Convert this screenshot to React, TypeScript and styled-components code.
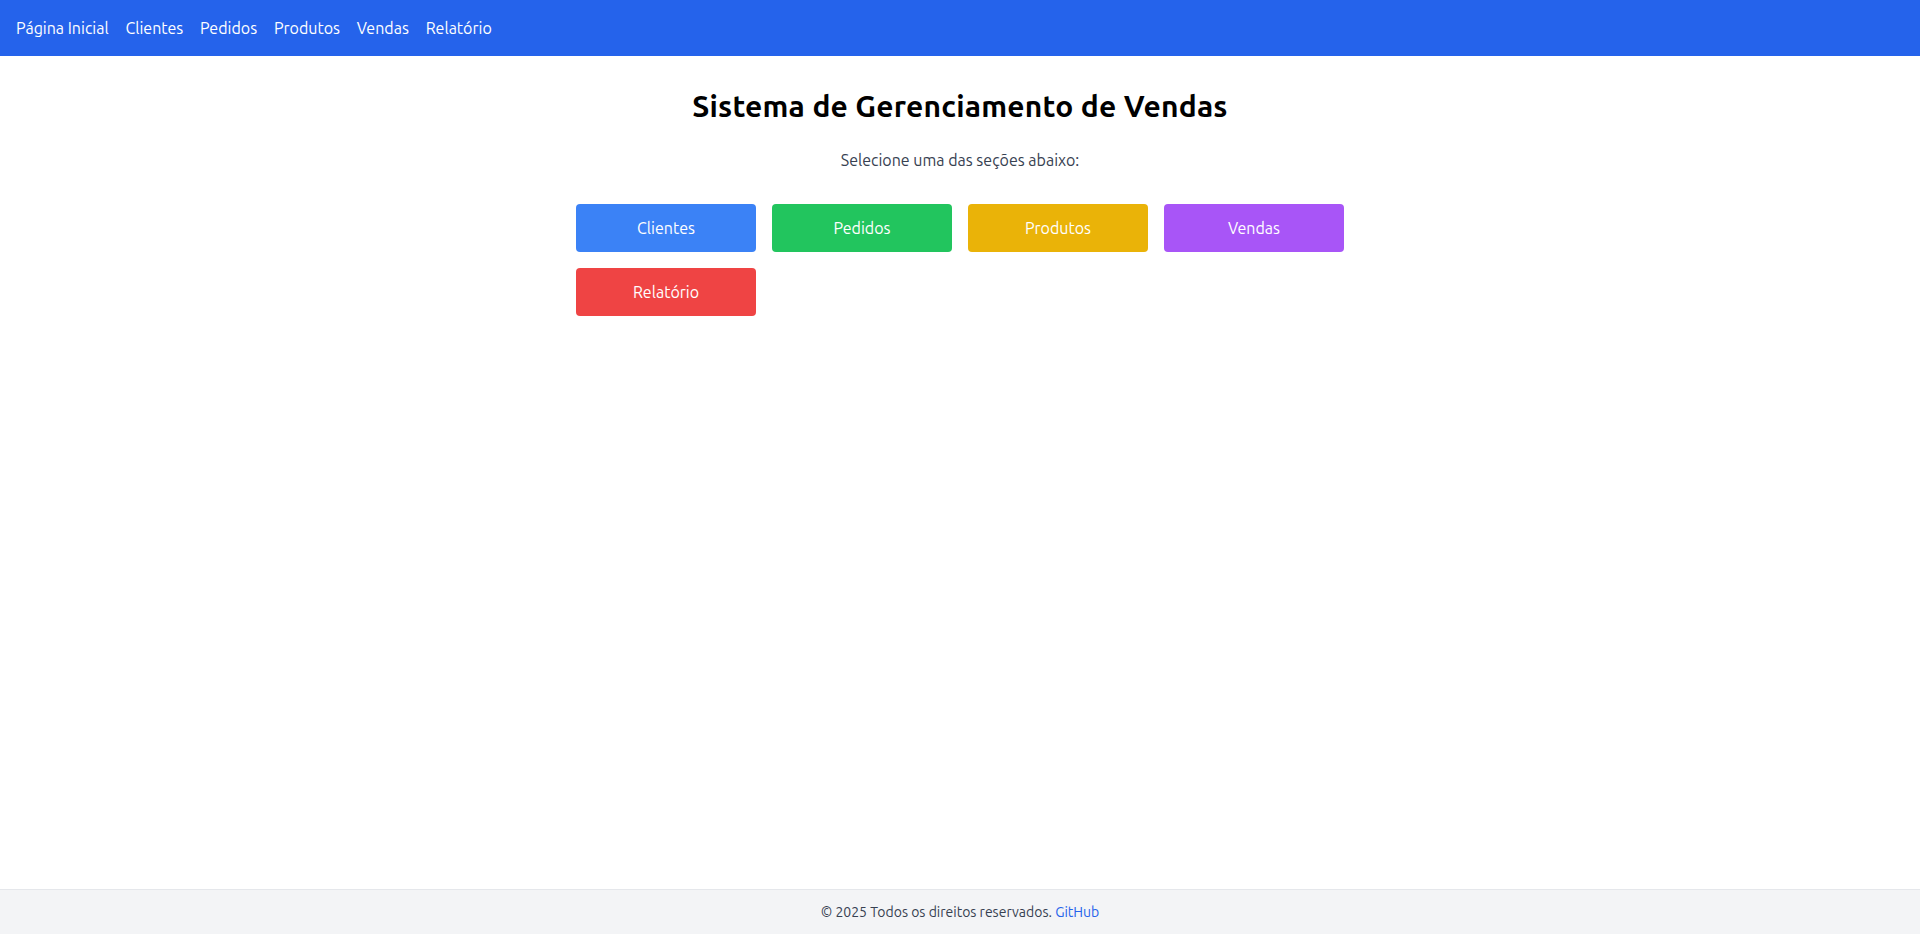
import React from "react";
import styled, { createGlobalStyle } from "styled-components";

const Global = createGlobalStyle`
  * { box-sizing: border-box; }
  html, body { margin: 0; padding: 0; }
  body {
    font-family: "Ubuntu", Lato, "Noto Sans", sans-serif;
    background: #ffffff;
    color: #000;
  }
  #root { min-height: 100vh; display: flex; flex-direction: column; }
`;

const Page = styled.div`
  min-height: 100vh;
  display: flex;
  flex-direction: column;
`;

const NavBar = styled.nav`
  background: #2563eb;
  padding: 16px;
  display: flex;
  gap: 16.8px;
  height: 56px;
  align-items: center;
`;

const NavLink = styled.a`
  color: #ffffff;
  font-size: 16px;
  line-height: 24px;
  text-decoration: none;
  cursor: pointer;
`;

const Main = styled.main`
  flex: 1;
  padding: 32px 16px;
  display: flex;
  flex-direction: column;
  align-items: center;
`;

const Title = styled.h1`
  margin: 0 0 24px;
  font-size: 30px;
  line-height: 36px;
  font-weight: 700;
  letter-spacing: 0.2px;
  color: #000;
  text-align: center;
`;

const Subtitle = styled.p`
  margin: 0 0 32px;
  font-size: 16px;
  line-height: 24px;
  color: #374151;
  text-align: center;
`;

const Grid = styled.div`
  width: 768px;
  display: grid;
  grid-template-columns: repeat(4, 1fr);
  gap: 16px;
`;

const SectionButton = styled.button<{ $bg: string }>`
  height: 48px;
  border: none;
  border-radius: 4px;
  background: ${(p) => p.$bg};
  color: #ffffff;
  font-family: inherit;
  font-size: 16px;
  line-height: 24px;
  cursor: pointer;
`;

const Footer = styled.footer`
  background: #f3f4f6;
  border-top: 1px solid #e5e7eb;
  padding: 12px 16px;
  text-align: center;
  font-size: 14px;
  line-height: 20px;
  color: #374151;
`;

const FooterLink = styled.a`
  color: #2563eb;
  text-decoration: none;
`;

const navItems = ["Página Inicial", "Clientes", "Pedidos", "Produtos", "Vendas", "Relatório"];

const sections = [
  { label: "Clientes", color: "#3b82f6" },
  { label: "Pedidos", color: "#22c55e" },
  { label: "Produtos", color: "#eab308" },
  { label: "Vendas", color: "#a855f7" },
  { label: "Relatório", color: "#ef4444" },
];

export default function App() {
  return (
    <Page>
      <Global />
      <NavBar>
        {navItems.map((n) => (
          <NavLink key={n}>{n}</NavLink>
        ))}
      </NavBar>
      <Main>
        <Title>Sistema de Gerenciamento de Vendas</Title>
        <Subtitle>Selecione uma das seções abaixo:</Subtitle>
        <Grid>
          {sections.map((s) => (
            <SectionButton key={s.label} $bg={s.color}>
              {s.label}
            </SectionButton>
          ))}
        </Grid>
      </Main>
      <Footer>
        © 2025 Todos os direitos reservados. <FooterLink>GitHub</FooterLink>
      </Footer>
    </Page>
  );
}
